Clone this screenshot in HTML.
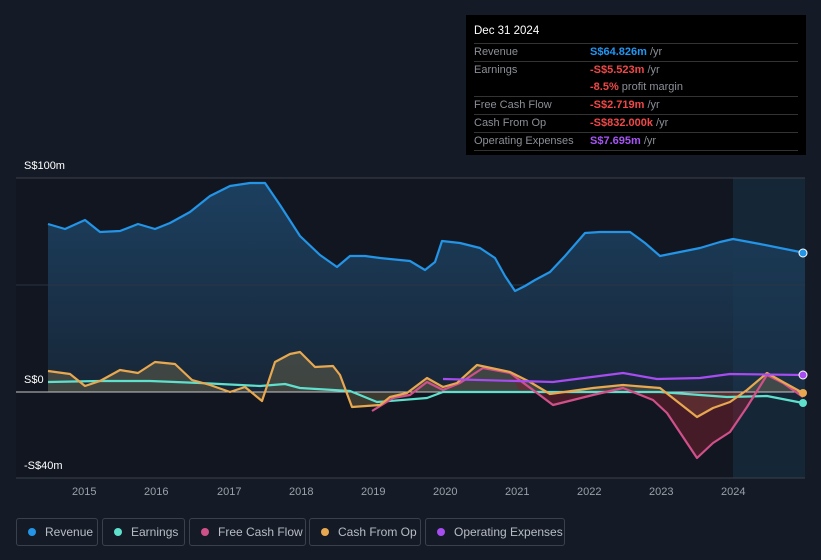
<!DOCTYPE html>
<html><head><meta charset="utf-8"><style>
body{margin:0;width:821px;height:560px;background:#151b26;font-family:"Liberation Sans",sans-serif;overflow:hidden;position:relative}
.tt{position:absolute;left:466px;top:15px;width:340px;height:140px;background:#000;box-sizing:border-box;padding:8px 8px 0 8px;font-size:11px;color:#8b8f96}
.tt .h{color:#fff;font-size:11.5px;height:20px;line-height:16px;border-bottom:1px solid #333}
.r{display:flex;height:17px;line-height:17px;border-bottom:1px solid #333}
.r.nb{border-bottom:none}
.r .l{width:116px}
.b{color:#2196f3;font-weight:bold}.red{color:#f04848;font-weight:bold}.p{color:#a855f7;font-weight:bold}
.ax{position:absolute;color:#fff;font-size:11px}
.xl{position:absolute;top:486px;color:#9aa0a8;font-size:11px}
.lg{position:absolute;top:518px;height:28px;border:1px solid #3a404c;border-radius:3px;box-sizing:border-box;color:#b8bcc4;font-size:12px;line-height:26px;padding-left:28px;white-space:nowrap}
.lg i{position:absolute;left:11px;top:9px;width:8px;height:8px;border-radius:50%}
</style></head><body>
<svg width="821" height="560" style="position:absolute;left:0;top:0">
<defs>
<linearGradient id="rg" x1="0" y1="0" x2="0" y2="1"><stop offset="0" stop-color="#1d4466" stop-opacity=".9"/><stop offset="1" stop-color="#18283a" stop-opacity=".9"/></linearGradient>
</defs>
<rect x="16" y="178" width="789" height="300" fill="#121620"/>
<path d="M48,224 L65,229 L85,220 L100,232 L120,231 L138,224 L155,229 L170,223 L190,212 L210,196 L230,186 L250,183 L265,183 L280,205 L300,236 L320,255 L337,267 L350,256 L365,256 L380,258 L410,261 L425,270 L435,262 L442,241 L460,243 L480,248 L495,258 L505,276 L515,291 L525,286 L535,280 L550,272 L565,256 L585,233 L600,232 L630,232 L645,243 L660,256 L680,252 L700,248 L720,242 L733,239 L760,244 L805,253 L805,392 L48,392Z" fill="url(#rg)"/>
<rect x="733" y="178" width="72" height="300" fill="#1a3a55" opacity=".45"/>
<line x1="16" y1="178" x2="805" y2="178" stroke="#3a404c"/>
<line x1="16" y1="285" x2="805" y2="285" stroke="#2a3444"/>
<line x1="16" y1="478" x2="805" y2="478" stroke="#3a404c"/>
<path d="M48,371 L70,374 L85,386 L100,381 L120,370 L138,373 L155,362 L175,364 L192,380 L210,385 L230,392 L245,387 L262,401 L275,362 L290,354 L300,352 L315,367 L333,366 L340,375 L352,407 L380,405 L390,397 L407,393 L427,378 L443,387 L457,383 L477,365 L510,372 L530,382 L550,394 L593,388 L623,385 L660,388 L697,417 L713,408 L730,402 L747,390 L767,373 L783,382 L803,393 L803,392 L48,392Z" fill="#8a7a50" opacity=".35"/>
<path d="M623,388 L653,400 L667,413 L697,458 L713,443 L730,432 L747,407 L760,392 L623,392Z M510,373 L533,390 L553,405 L593,395 L600,392 L520,392Z" fill="#7a2030" opacity=".5"/>
<line x1="16" y1="392" x2="805" y2="392" stroke="#c8c8c8" stroke-width="1"/>
<g fill="none" stroke-width="2.2" stroke-linejoin="round">
<path d="M48,224 L65,229 L85,220 L100,232 L120,231 L138,224 L155,229 L170,223 L190,212 L210,196 L230,186 L250,183 L265,183 L280,205 L300,236 L320,255 L337,267 L350,256 L365,256 L380,258 L410,261 L425,270 L435,262 L442,241 L460,243 L480,248 L495,258 L505,276 L515,291 L525,286 L535,280 L550,272 L565,256 L585,233 L600,232 L630,232 L645,243 L660,256 L680,252 L700,248 L720,242 L733,239 L760,244 L805,253" stroke="#2394e6"/>
<path d="M48,382 L100,381 L150,381 L200,383 L260,386 L285,384 L300,388 L350,391 L377,402 L427,398 L443,392 L527,392 L660,392 L727,397 L767,396 L803,403" stroke="#5ee0cc"/>
<path d="M372,411 L393,398 L410,395 L427,382 L443,390 L460,383 L483,368 L510,373 L533,390 L553,405 L593,395 L623,388 L653,400 L667,413 L697,458 L713,443 L730,432 L747,407 L767,375 L783,383 L803,397" stroke="#d0508a"/>
<path d="M48,371 L70,374 L85,386 L100,381 L120,370 L138,373 L155,362 L175,364 L192,380 L210,385 L230,392 L245,387 L262,401 L275,362 L290,354 L300,352 L315,367 L333,366 L340,375 L352,407 L380,405 L390,397 L407,393 L427,378 L443,387 L457,383 L477,365 L510,372 L530,382 L550,394 L593,388 L623,385 L660,388 L697,417 L713,408 L730,402 L747,390 L767,373 L783,382 L803,393" stroke="#e8a850"/>
<path d="M443,379 L553,382 L623,373 L657,379 L700,378 L730,374 L803,375" stroke="#a64cf0"/>
</g>
<circle cx="803" cy="253" r="4" fill="#2394e6" stroke="#fff" stroke-width="1"/>
<circle cx="803" cy="375" r="4" fill="#a64cf0" stroke="#fff" stroke-width="1"/>
<circle cx="803" cy="393" r="4" fill="#e8a850"/>
<circle cx="803" cy="403" r="4" fill="#5ee0cc"/>
</svg>
<div class="ax" style="left:24px;top:160px">S$100m</div>
<div class="ax" style="left:24px;top:374px">S$0</div>
<div class="ax" style="left:24px;top:460px">-S$40m</div>
<div class="xl" style="left:72px">2015</div><div class="xl" style="left:144px">2016</div><div class="xl" style="left:217px">2017</div><div class="xl" style="left:289px">2018</div><div class="xl" style="left:361px">2019</div><div class="xl" style="left:433px">2020</div><div class="xl" style="left:505px">2021</div><div class="xl" style="left:577px">2022</div><div class="xl" style="left:649px">2023</div><div class="xl" style="left:721px">2024</div>
<div class="tt">
<div class="h">Dec 31 2024</div>
<div class="r"><span class="l">Revenue</span><span><span class="b">S$64.826m</span> /yr</span></div>
<div class="r nb"><span class="l">Earnings</span><span><span class="red">-S$5.523m</span> /yr</span></div>
<div class="r"><span class="l"></span><span><span class="red">-8.5%</span> profit margin</span></div>
<div class="r"><span class="l">Free Cash Flow</span><span><span class="red">-S$2.719m</span> /yr</span></div>
<div class="r"><span class="l">Cash From Op</span><span><span class="red">-S$832.000k</span> /yr</span></div>
<div class="r"><span class="l">Operating Expenses</span><span><span class="p">S$7.695m</span> /yr</span></div>
</div>
<div class="lg" style="left:16px;width:82px"><i style="background:#2394e6"></i>Revenue</div>
<div class="lg" style="left:102px;width:83px"><i style="background:#5ee0cc"></i>Earnings</div>
<div class="lg" style="left:189px;width:117px"><i style="background:#d0508a"></i>Free Cash Flow</div>
<div class="lg" style="left:309px;width:112px"><i style="background:#e8a850"></i>Cash From Op</div>
<div class="lg" style="left:425px;width:140px"><i style="background:#a64cf0"></i>Operating Expenses</div>
</body></html>
